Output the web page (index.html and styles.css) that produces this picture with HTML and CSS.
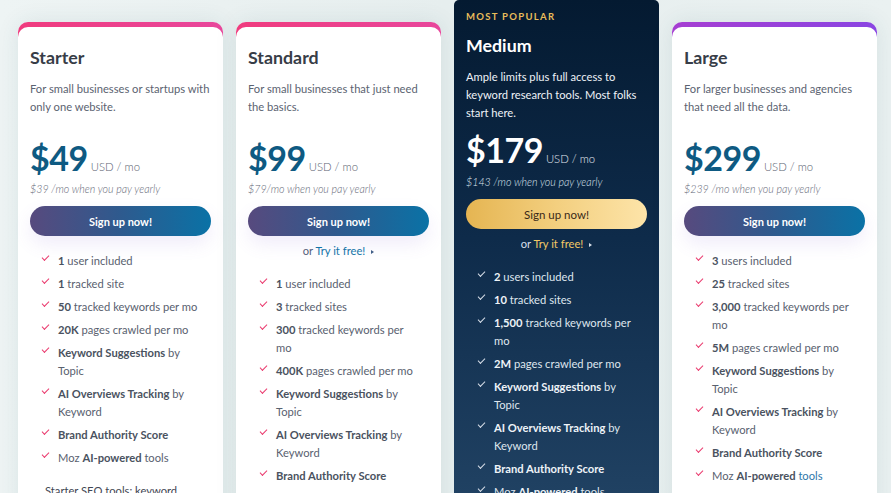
FILE: index.html
```html
<!DOCTYPE html>
<html lang="en">
<head>
<meta charset="utf-8">
<title>Pricing</title>
<link rel="stylesheet" href="styles.css">
</head>
<body>
<div class="plans">

  <div class="plan plan-pink">
    <div class="plan-body">
      <h2 class="plan-name">Starter</h2>
      <p class="plan-desc">For small businesses or startups with only one website.</p>
      <div class="price"><span class="amount">$49</span><span class="unit">USD / mo</span></div>
      <p class="yearly">$39 /mo when you pay yearly</p>
      <a class="btn" href="#">Sign up now!</a>
      <ul class="features">
        <li><b>1</b> user included</li>
        <li><b>1</b> tracked site</li>
        <li><b>50</b> tracked keywords per mo</li>
        <li><b>20K</b> pages crawled per mo</li>
        <li><b>Keyword Suggestions</b> by Topic</li>
        <li><b>AI Overviews Tracking</b> by Keyword</li>
        <li><b>Brand Authority Score</b></li>
        <li>Moz <b>AI-powered</b> tools</li>
      </ul>
      <p class="tools">Starter SEO tools: keyword research, site audits and more</p>
    </div>
  </div>

  <div class="plan plan-pink">
    <div class="plan-body">
      <h2 class="plan-name">Standard</h2>
      <p class="plan-desc">For small businesses that just need the basics.</p>
      <div class="price"><span class="amount">$99</span><span class="unit">USD / mo</span></div>
      <p class="yearly">$79/mo when you pay yearly</p>
      <a class="btn" href="#">Sign up now!</a>
      <p class="trial">or <a href="#">Try it free!</a><span class="caret"></span></p>
      <ul class="features">
        <li><b>1</b> user included</li>
        <li><b>3</b> tracked sites</li>
        <li><b>300</b> tracked keywords per mo</li>
        <li><b>400K</b> pages crawled per mo</li>
        <li><b>Keyword Suggestions</b> by Topic</li>
        <li><b>AI Overviews Tracking</b> by Keyword</li>
        <li><b>Brand Authority Score</b></li>
        <li>Moz <b>AI-powered</b> tools</li>
      </ul>
    </div>
  </div>

  <div class="plan plan-featured">
    <div class="plan-body">
      <p class="badge">Most popular</p>
      <h2 class="plan-name">Medium</h2>
      <p class="plan-desc">Ample limits plus full access to keyword research tools. Most folks start here.</p>
      <div class="price"><span class="amount">$179</span><span class="unit">USD / mo</span></div>
      <p class="yearly">$143 /mo when you pay yearly</p>
      <a class="btn btn-gold" href="#">Sign up now!</a>
      <p class="trial">or <a href="#">Try it free!</a><span class="caret"></span></p>
      <ul class="features">
        <li><b>2</b> users included</li>
        <li><b>10</b> tracked sites</li>
        <li><b>1,500</b> tracked keywords per mo</li>
        <li><b>2M</b> pages crawled per mo</li>
        <li><b>Keyword Suggestions</b> by Topic</li>
        <li><b>AI Overviews Tracking</b> by Keyword</li>
        <li><b>Brand Authority Score</b></li>
        <li>Moz <b>AI-powered</b> tools</li>
      </ul>
    </div>
  </div>

  <div class="plan plan-purple">
    <div class="plan-body">
      <h2 class="plan-name">Large</h2>
      <p class="plan-desc">For larger businesses and agencies that need all the data.</p>
      <div class="price"><span class="amount">$299</span><span class="unit">USD / mo</span></div>
      <p class="yearly">$239 /mo when you pay yearly</p>
      <a class="btn" href="#">Sign up now!</a>
      <ul class="features">
        <li><b>3</b> users included</li>
        <li><b>25</b> tracked sites</li>
        <li><b>3,000</b> tracked keywords per mo</li>
        <li><b>5M</b> pages crawled per mo</li>
        <li><b>Keyword Suggestions</b> by Topic</li>
        <li><b>AI Overviews Tracking</b> by Keyword</li>
        <li><b>Brand Authority Score</b></li>
        <li>Moz <b>AI-powered</b> <span class="link">tools</span></li>
      </ul>
    </div>
  </div>

</div>
</body>
</html>
```

FILE: styles.css
```css
* { box-sizing: border-box; }

html, body {
  margin: 0;
  padding: 0;
  height: 100%;
  overflow: hidden;
}

body {
  font-family: Lato, "Open Sans", Arial, sans-serif;
  background: linear-gradient(90deg, #eef4f4 0%, #e6eeee 50%, #eaf1f1 100%);
  color: #535b69;
}

.plans {
  display: flex;
  align-items: flex-start;
  gap: 13px;
  padding-left: 18px;
}

.plan {
  flex: 0 0 205px;
  width: 205px;
  margin-top: 22px;
  padding-top: 5px;
  border-radius: 10px 10px 0 0;
  box-shadow: 0 0 22px rgba(40, 90, 100, 0.10);
  min-height: 600px;
}

.plan-pink { background: linear-gradient(90deg, #f03b7e, #e8479c); }
.plan-purple { background: linear-gradient(90deg, #a63ed2, #8a45e2); }

.plan-body {
  background: #fff;
  border-radius: 10px 10px 0 0;
  padding: 18px 12px 0 12px;
  min-height: 595px;
}

.plan-name {
  margin: 0;
  font-size: 17.8px;
  line-height: 24px;
  font-weight: 700;
  color: #373d47;
}

.plan-desc {
  margin: 11px 0 0;
  font-size: 11.2px;
  line-height: 18px;
  min-height: 50px;
  color: #5b6371;
}

.price {
  display: flex;
  align-items: baseline;
  gap: 3px;
  margin-top: 7.5px;
}

.amount {
  font-size: 34px;
  line-height: 40px;
  font-weight: 700;
  color: #0e5a82;
  letter-spacing: -0.5px;
}

.unit {
  font-size: 11.3px;
  font-weight: 300;
  color: #596170;
}

.yearly {
  margin: 4.5px 0 0;
  font-size: 10.7px;
  line-height: 14px;
  font-style: italic;
  font-weight: 300;
  color: #5f6776;
}

.btn {
  display: flex;
  align-items: center;
  justify-content: center;
  height: 30px;
  margin-top: 10px;
  border-radius: 15px;
  background: linear-gradient(90deg, #574a7e 0%, #2e5a8e 50%, #0a72a6 100%);
  color: #fff;
  font-size: 11px;
  font-weight: 700;
  text-decoration: none;
  box-shadow: 0 8px 18px rgba(130, 100, 210, 0.12);
}

.trial {
  margin: 6px 0 0;
  text-align: center;
  font-size: 11.2px;
  line-height: 18px;
  color: #56607a;
}

.trial a {
  color: #1474a8;
  text-decoration: none;
}

.caret {
  display: inline-block;
  width: 0;
  height: 0;
  margin-left: 6px;
  border-left: 3px solid #3f5d86;
  border-top: 2.5px solid transparent;
  border-bottom: 2.5px solid transparent;
  vertical-align: 1px;
}

.features {
  list-style: none;
  margin: 16px 0 0;
  padding: 0 8px 0 11px;
}

.trial + .features { margin-top: 15px; }

.features li {
  position: relative;
  padding-left: 17px;
  font-size: 11.2px;
  line-height: 18px;
  color: #59616f;
  margin-bottom: 5px;
}

.features li b {
  font-weight: 700;
  color: #4a5260;
}

.features li::before {
  content: "";
  position: absolute;
  left: 1px;
  top: 3px;
  width: 6px;
  height: 3px;
  border-left: 1.6px solid #ea3a6e;
  border-bottom: 1.6px solid #ea3a6e;
  transform: rotate(-45deg);
}

.link { color: #2f78ab; }

.tools {
  margin: 15px 0 0 15px;
  font-size: 11.2px;
  line-height: 18px;
  color: #3f4653;
}

/* featured plan */
.plan-featured {
  margin-top: 0;
  padding-top: 0;
  background: linear-gradient(180deg, #041a31 0%, #0e2b4a 40%, #274a6c 100%);
  border-radius: 5px 5px 0 0;
  min-height: 493px;
  box-shadow: none;
}

.plan-featured .plan-body {
  background: transparent;
  padding-top: 10px;
}

.badge {
  margin: 0 0 9px;
  font-size: 9.5px;
  line-height: 14px;
  font-weight: 700;
  letter-spacing: 1.3px;
  text-transform: uppercase;
  color: #e8bd5a;
}

.plan-featured .plan-name { color: #fff; }
.plan-featured .plan-desc { color: #eef2f7; }
.plan-featured .amount { color: #fff; }
.plan-featured .unit { color: #e2e8f0; }
.plan-featured .yearly { color: #dce4ee; margin-top: 5.5px; }
.plan-featured .trial { color: #d6dee8; }
.plan-featured .trial a { color: #f2c866; }
.plan-featured .caret { border-left-color: #d6dee8; }
.plan-featured .features li { color: #dfe6ee; }
.plan-featured .features li b { color: #eef3f8; }
.plan-featured .features li::before {
  border-color: #d7dee8;
  border-width: 0 0 1.2px 1.2px;
}

.btn-gold {
  background: linear-gradient(90deg, #e5b552 0%, #f3cf7f 50%, #fde4a9 100%);
  color: #3a2a18;
  font-weight: 400;
  font-size: 11.5px;
  box-shadow: none;
}
```
